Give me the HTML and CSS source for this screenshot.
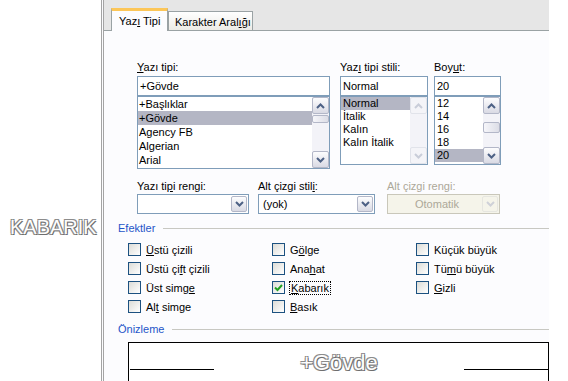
FILE: index.html
```html
<!DOCTYPE html>
<html lang="tr">
<head>
    <meta charset="UTF-8">
    <title>Yazı Tipi</title>
    <link rel="stylesheet" href="styles.css">
</head>
<body>
    <div class="screen">
        <div class="aside">
            <span class="emboss aside-word">KABARIK</span>
        </div>
        <div class="dialog">
            <div class="tabstrip">
                <div class="tab tab-active">Yaz<u>ı</u> Tipi</div>
                <div class="tab">Karakter Aral<u>ı</u>ğı</div>
            </div>
            <div class="panel">
                <div class="font-row">
                    <div class="col-font">
                        <div class="label"><u>Y</u>azı tipi:</div>
                        <div class="textbox">+Gövde</div>
                        <div class="listbox list-font">
                            <ul class="items">
                                <li>+Başlıklar</li>
                                <li class="selected">+Gövde</li>
                                <li>Agency FB</li>
                                <li>Algerian</li>
                                <li>Arial</li>
                            </ul>
                            <div class="vscroll">
                                <div class="sbtn"><svg width="9" height="6" viewBox="0 0 9 6"><path d="M1 5 L4.5 1.5 L8 5" fill="none" stroke="#4d6185" stroke-width="2"/></svg></div>
                                <div class="track"><div class="thumb"></div></div>
                                <div class="sbtn"><svg width="9" height="6" viewBox="0 0 9 6"><path d="M1 1 L4.5 4.5 L8 1" fill="none" stroke="#4d6185" stroke-width="2"/></svg></div>
                            </div>
                        </div>
                    </div>
                    <div class="col-style">
                        <div class="label">Yaz<u>ı</u> tipi stili:</div>
                        <div class="textbox">Normal</div>
                        <div class="listbox list-small">
                            <ul class="items">
                                <li class="selected">Normal</li>
                                <li>İtalik</li>
                                <li>Kalın</li>
                                <li>Kalın İtalik</li>
                            </ul>
                            <div class="vscroll">
                                <div class="sbtn sbtn-off"><svg width="9" height="6" viewBox="0 0 9 6"><path d="M1 5 L4.5 1.5 L8 5" fill="none" stroke="#c9cdd9" stroke-width="2"/></svg></div>
                                <div class="track"></div>
                                <div class="sbtn sbtn-off"><svg width="9" height="6" viewBox="0 0 9 6"><path d="M1 1 L4.5 4.5 L8 1" fill="none" stroke="#c9cdd9" stroke-width="2"/></svg></div>
                            </div>
                        </div>
                    </div>
                    <div class="col-size">
                        <div class="label">Boy<u>u</u>t:</div>
                        <div class="textbox">20</div>
                        <div class="listbox list-small">
                            <ul class="items">
                                <li>12</li>
                                <li>14</li>
                                <li>16</li>
                                <li>18</li>
                                <li class="selected">20</li>
                            </ul>
                            <div class="vscroll">
                                <div class="sbtn"><svg width="9" height="6" viewBox="0 0 9 6"><path d="M1 5 L4.5 1.5 L8 5" fill="none" stroke="#4d6185" stroke-width="2"/></svg></div>
                                <div class="track"><div class="thumb thumb-mid"></div></div>
                                <div class="sbtn"><svg width="9" height="6" viewBox="0 0 9 6"><path d="M1 1 L4.5 4.5 L8 1" fill="none" stroke="#4d6185" stroke-width="2"/></svg></div>
                            </div>
                        </div>
                    </div>
                </div>

                <div class="line-row">
                    <div class="col-color">
                        <div class="label label-tight">Yazı ti<u>p</u>i rengi:</div>
                        <div class="combo">
                            <div class="combo-value"></div>
                            <div class="combo-btn"><svg width="9" height="6" viewBox="0 0 9 6"><path d="M1 1 L4.5 4.5 L8 1" fill="none" stroke="#4d6185" stroke-width="2"/></svg></div>
                        </div>
                    </div>
                    <div class="col-ustyle">
                        <div class="label label-tight">Alt çizgi stil<u>i</u>:</div>
                        <div class="combo">
                            <div class="combo-value">(yok)</div>
                            <div class="combo-btn"><svg width="9" height="6" viewBox="0 0 9 6"><path d="M1 1 L4.5 4.5 L8 1" fill="none" stroke="#4d6185" stroke-width="2"/></svg></div>
                        </div>
                    </div>
                    <div class="col-ucolor">
                        <div class="label label-tight label-off">Alt çizgi rengi:</div>
                        <div class="combo combo-off">
                            <div class="combo-value">Otomatik</div>
                            <div class="combo-btn"><svg width="9" height="6" viewBox="0 0 9 6"><path d="M1 1 L4.5 4.5 L8 1" fill="none" stroke="#cfd1d8" stroke-width="2"/></svg></div>
                        </div>
                    </div>
                </div>

                <div class="group-title">
                    <span>Efektler</span>
                    <span class="rule"></span>
                </div>
                <div class="effects">
                    <div class="check-item"><span class="check"></span><span><u>Ü</u>stü çizili</span></div>
                    <div class="check-item"><span class="check"></span><span>Üstü çi<u>f</u>t çizili</span></div>
                    <div class="check-item"><span class="check"></span><span>Üst simg<u>e</u></span></div>
                    <div class="check-item"><span class="check"></span><span>Al<u>t</u> simge</span></div>
                    <div class="check-item"><span class="check"></span><span>G<u>ö</u>lge</span></div>
                    <div class="check-item"><span class="check"></span><span>Ana<u>h</u>at</span></div>
                    <div class="check-item"><span class="check"><svg width="11" height="11" viewBox="0 0 11 11"><path d="M2 5.5 L4.5 8 L9 3" fill="none" stroke="#21a121" stroke-width="2"/></svg></span><span class="focused"><u>K</u>abarık</span></div>
                    <div class="check-item"><span class="check"></span><span><u>B</u>asık</span></div>
                    <div class="check-item"><span class="check"></span><span>Küçük büyük</span></div>
                    <div class="check-item"><span class="check"></span><span>Tü<u>m</u>ü büyük</span></div>
                    <div class="check-item"><span class="check"></span><span><u>G</u>izli</span></div>
                </div>

                <div class="group-title group-preview">
                    <span>Önizleme</span>
                    <span class="rule"></span>
                </div>
                <div class="preview">
                    <div class="preview-row">
                        <div class="pv-line"></div>
                        <div class="emboss pv-text">+Gövde</div>
                        <div class="pv-line"></div>
                    </div>
                </div>
            </div>
        </div>
    </div>
</body>
</html>
```

FILE: styles.css
```css
body {
    margin: 0;
    background-color: #fff;
    font-family: "Liberation Sans", Arial, sans-serif;
    font-size: 11px;
    color: #000;
}
.screen {
    display: flex;
    width: 568px;
    height: 381px;
    overflow: hidden;
}
.aside {
    width: 101px;
    flex: none;
    box-sizing: border-box;
    padding: 215px 0 0 10px;
}
.emboss {
    color: #fdfdfd;
    text-shadow: 1px 1px 0 #6e6e6e, -1px -1px 0 #8c8c8c, 1px -1px 0 #8c8c8c, -1px 1px 0 #8c8c8c;
}
.aside-word {
    font-size: 20px;
    line-height: 24px;
}
.dialog {
    width: 448px;
    flex: none;
    box-sizing: border-box;
    border-left: 3px double #a4a4a4;
    background-color: #fcfcfe;
    display: flex;
    flex-direction: column;
    overflow: hidden;
}
.tabstrip {
    flex: none;
    height: 31px;
    box-sizing: border-box;
    background-color: #e6e6e6;
    border-bottom: 1px solid #9aa2a4;
    display: flex;
    align-items: flex-end;
    padding-left: 7px;
}
.tab {
    box-sizing: border-box;
    height: 19px;
    width: 85px;
    padding: 3px 0 0 6px;
    line-height: 14px;
    white-space: nowrap;
    border: 1px solid #9aa2a4;
    border-bottom: none;
    background: linear-gradient(#ffffff, #ecebe6);
}
.tab-active {
    height: 23px;
    width: 57px;
    margin-bottom: -1px;
    padding: 3px 0 0 7px;
    border-top: 3px solid #fcc658;
    background: #fcfcfe;
}
.panel {
    flex: none;
    padding-top: 29px;
}
.font-row {
    display: flex;
    align-items: flex-start;
    padding-left: 33px;
}
.col-font {
    width: 193px;
    margin-right: 10px;
}
.col-style {
    width: 88px;
    margin-right: 6px;
}
.col-size {
    width: 67px;
}
.label {
    height: 14px;
    line-height: 14px;
    margin-bottom: 2px;
    white-space: nowrap;
}
.label-tight {
    margin-bottom: 1px;
}
.label-off {
    color: #aca899;
}
.textbox {
    height: 20px;
    box-sizing: border-box;
    border: 1px solid #7f9db9;
    background-color: #fff;
    padding: 2px 2px;
    line-height: 14px;
}
.listbox {
    display: flex;
    box-sizing: border-box;
    border: 1px solid #7f9db9;
    background-color: #fff;
}
.list-font {
    height: 73px;
}
.list-small {
    height: 69px;
}
.items {
    list-style: none;
    margin: 0;
    padding: 0;
    flex: 1;
    min-width: 0;
}
.items li {
    height: 14px;
    line-height: 14px;
    padding-left: 1px;
    white-space: nowrap;
    overflow: hidden;
}
.list-small .items li {
    height: 13px;
    line-height: 13px;
    padding-left: 2px;
}
.items .selected {
    background-color: #b4b6c4;
}
.vscroll {
    width: 17px;
    flex: none;
    display: flex;
    flex-direction: column;
    background-color: #f3f3f8;
}
.sbtn {
    height: 17px;
    flex: none;
    box-sizing: border-box;
    border: 1px solid #b3b7c8;
    border-radius: 2px;
    background: linear-gradient(#fdfdfe, #d9dae4);
    display: flex;
    align-items: center;
    justify-content: center;
}
.sbtn-off {
    border-color: #e1e3ea;
    background: #f4f4f8;
}
.track {
    flex: 1;
}
.thumb {
    height: 8px;
    margin-top: 1px;
    box-sizing: border-box;
    border: 1px solid #b3b7c8;
    border-radius: 2px;
    background: linear-gradient(90deg, #f6f6fa, #dcdde6);
}
.thumb-mid {
    height: 11px;
    margin-top: 8px;
}
.line-row {
    display: flex;
    margin-top: 10px;
    padding-left: 33px;
}
.col-color {
    width: 112px;
    margin-right: 9px;
}
.col-ustyle {
    width: 117px;
    margin-right: 12px;
}
.col-ucolor {
    width: 113px;
}
.combo {
    display: flex;
    height: 20px;
    box-sizing: border-box;
    border: 1px solid #7f9db9;
    background-color: #fff;
    padding: 1px;
}
.combo-value {
    flex: 1;
    padding-left: 3px;
    line-height: 16px;
    white-space: nowrap;
}
.combo-btn {
    width: 16px;
    box-sizing: border-box;
    border: 1px solid #b3b7c8;
    border-radius: 2px;
    background: linear-gradient(#fdfdfe, #d9dae4);
    display: flex;
    align-items: center;
    justify-content: center;
}
.combo-off {
    border-color: #c9c7ba;
    background-color: #f5f4ea;
}
.combo-off .combo-value {
    color: #aca899;
    text-align: center;
}
.combo-off .combo-btn {
    border-color: #e6e6e0;
    background: #f5f4ea;
}
.group-title {
    display: flex;
    align-items: center;
    margin-top: 7px;
    padding-left: 14px;
    line-height: 14px;
    color: #1f55c8;
}
.rule {
    flex: 1;
    margin-left: 8px;
    border-top: 1px solid #c8c8c2;
}
.group-preview {
    margin-top: 6px;
}
.effects {
    display: grid;
    grid-template-columns: repeat(3, 144px);
    grid-template-rows: repeat(4, 19px);
    grid-auto-flow: column;
    margin-top: 5px;
    padding-left: 24px;
}
.check-item {
    display: flex;
    align-items: center;
    white-space: nowrap;
}
.check {
    width: 13px;
    height: 13px;
    box-sizing: border-box;
    margin-right: 5px;
    border: 1px solid #1c5180;
    background: linear-gradient(135deg, #dcdcd7, #ffffff);
    display: flex;
    align-items: center;
    justify-content: center;
}
.focused {
    margin-left: -1px;
    padding: 0 1px;
    line-height: 12px;
    border: 1px dotted #000;
}
.preview {
    margin: 6px 0 0 24px;
    width: 421px;
    height: 60px;
    box-sizing: border-box;
    border: 1px solid #000;
    background-color: #fff;
}
.preview-row {
    display: flex;
    align-items: baseline;
    padding: 8px 0 0 1px;
}
.pv-line {
    width: 84px;
    height: 1px;
    background-color: #000;
}
.pv-text {
    flex: 1;
    text-align: center;
    font-size: 22px;
    line-height: 24px;
}
```
